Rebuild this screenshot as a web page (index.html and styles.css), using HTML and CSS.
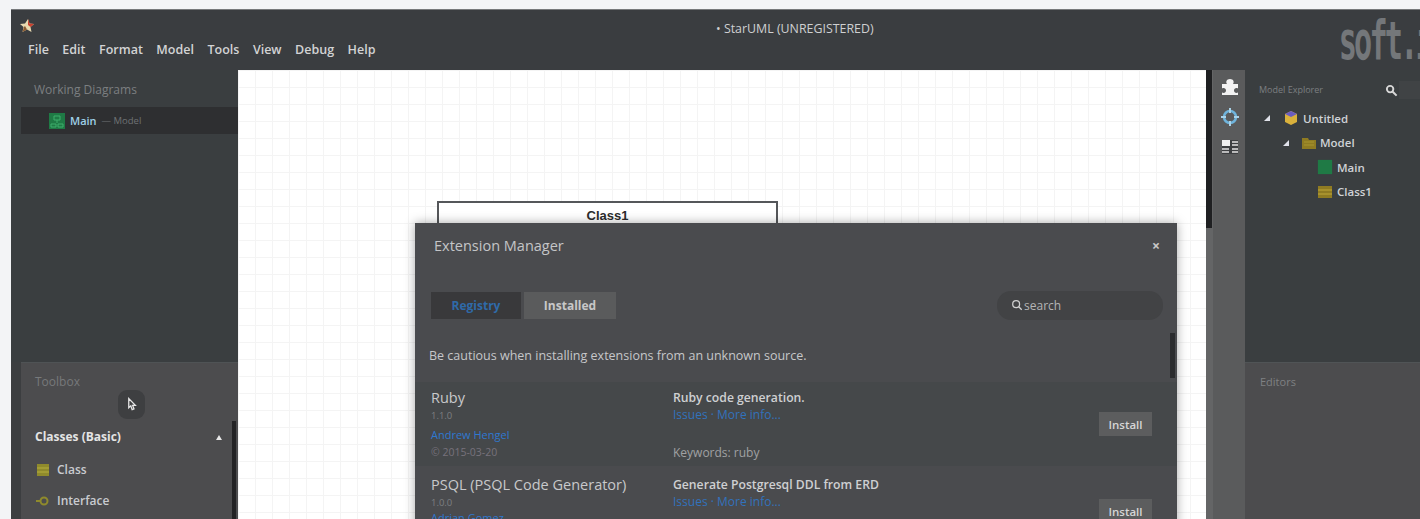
FILE: index.html
```html
<!DOCTYPE html>
<html lang="en">
<head>
<meta charset="utf-8">
<title>StarUML</title>
<link rel="stylesheet" href="styles.css">
</head>
<body>
<div class="app">
  <header class="titlebar">
    <div class="titlebar-left">
      <svg class="logo" viewBox="0 0 16 16" width="16" height="16">
        <path d="M9 1l1.5 4.5L15 6l-3.5 3 1 5L8 11.5 3.500 14l1-5L1 6l5-.5z" fill="#e8d9b0"/>
        <path d="M9 1l1.500 4.500L15 6l-3.500 3L9 7z" fill="#c8402f"/>
        <path d="M5 9l-1.500 5L8 11.500 6 8z" fill="#8a5a30"/>
      </svg>
      <nav class="menu">
        <span>File</span><span>Edit</span><span>Format</span><span>Model</span><span>Tools</span><span>View</span><span>Debug</span><span>Help</span>
      </nav>
    </div>
    <div class="window-title">• StarUML (UNREGISTERED)</div>
    <div class="watermark">soft.i</div>
  </header>

  <div class="workspace">
    <aside class="sidebar">
      <section class="side-top">
        <h2 class="panel-label">Working Diagrams</h2>
        <div class="diagram-row">
          <svg class="diagram-icon" viewBox="0 0 18 18" width="18" height="18">
            <rect x="1" y="1" width="16" height="16" fill="#1f7a45"/>
            <path d="M6 4h6v4H6zM3 12h5v3H3zM10 12h5v3h-5zM9 8v3" fill="none" stroke="#3fae6c" stroke-width="1"/>
          </svg>
          <span class="diagram-name">Main</span>
          <span class="diagram-owner">— Model</span>
        </div>
      </section>
      <section class="toolbox">
        <h2 class="panel-label toolbox-label">Toolbox</h2>
        <div class="cursor-wrap">
          <button class="cursor-btn" type="button">
            <svg viewBox="0 0 12 16" width="11" height="15">
              <path d="M3 1.500v10l2.200-2 1.500 4 2-.8-1.500-3.800h3z" fill="none" stroke="#e6e6e6" stroke-width="1.400"/>
            </svg>
          </button>
        </div>
        <div class="tool-head"><span>Classes (Basic)</span><i class="tool-caret"></i></div>
        <ul class="tool-list">
          <li>
            <svg viewBox="0 0 16 16" width="16" height="16"><rect x="2" y="2" width="12" height="12" fill="#8f8a2c"/><path d="M2 6h12M2 10h12" stroke="#b5ae3e"/></svg>
            Class
          </li>
          <li>
            <svg viewBox="0 0 16 16" width="16" height="16"><circle cx="9" cy="8" r="3.500" fill="none" stroke="#8f8a2c" stroke-width="2"/><path d="M1 8h5" stroke="#8f8a2c" stroke-width="2"/></svg>
            Interface
          </li>
        </ul>
        <div class="toolbox-scroll"></div>
      </section>
    </aside>

    <main class="canvas">
      <div class="class-node">Class1</div>
    </main>

    <div class="rail">
      <div class="rail-scroll"></div>
      <div class="rail-icons">
        <svg viewBox="0 0 20 20" width="20" height="20">
          <path d="M2 7h5c-1.500-2-.5-5 3-5s4.500 3 3 5h5v4.500c-2-1-4 0-4 2s2 3 4 2V18H2v-2.500c2 1 4 0 4-2s-2-3-4-2z" fill="#f2f2f2"/>
        </svg>
        <svg viewBox="0 0 20 20" width="20" height="20">
          <circle cx="10" cy="10" r="6" fill="none" stroke="#6fb4dc" stroke-width="2.500"/>
          <path d="M10 1v5M10 14v5M1 10h5M14 10h5" stroke="#a9d3ea" stroke-width="2"/>
        </svg>
        <svg viewBox="0 0 20 20" width="20" height="20">
          <rect x="2" y="3" width="16" height="14" fill="#3d3f41"/>
          <rect x="2" y="3" width="8" height="6" fill="#f0f0f0"/>
          <path d="M12 5h6M12 8h6M2 12h7M12 12h6M2 15h7M12 15h6" stroke="#e4e4e4" stroke-width="1.500"/>
        </svg>
      </div>
    </div>

    <aside class="explorer">
      <section class="explorer-top">
        <div class="explorer-head">
          <h2 class="panel-label">Model Explorer</h2>
          <svg class="explorer-search" viewBox="0 0 14 14" width="13" height="13">
            <circle cx="5.500" cy="5.500" r="3.500" fill="none" stroke="#d8d8d8" stroke-width="2"/>
            <path d="M8 8l4.500 4.500" stroke="#d8d8d8" stroke-width="2.200"/>
          </svg>
          <div class="explorer-field"></div>
        </div>
        <ul class="tree">
          <li class="depth-0">
            <i class="tree-arrow"></i>
            <svg viewBox="0 0 16 16" width="16" height="16"><path d="M8 1l6 3v8l-6 3-6-3V4z" fill="#d9b13c"/><path d="M8 1l6 3-6 3-6-3z" fill="#6a5cc0"/></svg>
            <span>Untitled</span>
          </li>
          <li class="depth-1">
            <i class="tree-arrow"></i>
            <svg viewBox="0 0 16 16" width="16" height="16"><path d="M1 3h6l1 2h7v9H1z" fill="#8f7b22"/><path d="M3 7h10M3 10h10" stroke="#a8962e"/></svg>
            <span>Model</span>
          </li>
          <li class="depth-2">
            <svg viewBox="0 0 18 18" width="16" height="18"><rect x="1" y="1" width="16" height="16" fill="#1f7a45"/></svg>
            <span>Main</span>
          </li>
          <li class="depth-2">
            <svg viewBox="0 0 16 16" width="16" height="16"><rect x="1" y="2" width="14" height="12" fill="#8f7b22"/><path d="M1 6h14M1 10h14" stroke="#bfa838"/></svg>
            <span>Class1</span>
          </li>
        </ul>
      </section>
      <section class="editors">
        <h2 class="panel-label">Editors</h2>
      </section>
    </aside>
  </div>

  <div class="modal">
    <div class="modal-head">
      <h1>Extension Manager</h1>
      <span class="modal-close">×</span>
    </div>
    <div class="modal-tools">
      <div class="tabs">
        <span class="tab tab-active">Registry</span>
        <span class="tab">Installed</span>
      </div>
      <label class="search">
        <svg viewBox="0 0 14 14" width="12" height="12">
          <circle cx="6" cy="6" r="4" fill="none" stroke="#d0d0d0" stroke-width="1.500"/>
          <path d="M9 9l3.500 3.500" stroke="#d0d0d0" stroke-width="1.500"/>
        </svg>
        <span>search</span>
      </label>
    </div>
    <div class="notice">Be cautious when installing extensions from an unknown source.</div>
    <div class="modal-scroll"></div>
    <article class="ext ext-shaded">
      <div class="ext-meta">
        <h3>Ruby</h3>
        <div class="ext-version">1.1.0</div>
        <a class="ext-author">Andrew Hengel</a>
        <div class="ext-date">© 2015-03-20</div>
      </div>
      <div class="ext-info">
        <p class="ext-desc">Ruby code generation.</p>
        <p class="ext-links">Issues · More info...</p>
        <p class="ext-keys">Keywords: ruby</p>
      </div>
      <button class="install" type="button">Install</button>
    </article>
    <article class="ext">
      <div class="ext-meta">
        <h3>PSQL (PSQL Code Generator)</h3>
        <div class="ext-version">1.0.0</div>
        <a class="ext-author">Adrian Gomez</a>
      </div>
      <div class="ext-info">
        <p class="ext-desc">Generate Postgresql DDL from ERD</p>
        <p class="ext-links">Issues · More info...</p>
      </div>
      <button class="install" type="button">Install</button>
    </article>
  </div>
</div>
</body>
</html>
```

FILE: styles.css
```css
* { box-sizing: border-box; }

html, body {
  margin: 0;
  height: 100%;
}

body {
  padding: 9px 0 0 11px;
  background: #f3f4f6;
  overflow: hidden;
  font-family: "Open Sans", "Liberation Sans", sans-serif;
  font-size: 11px;
  color: #e0e0e0;
}

.app {
  position: relative;
  height: 510px;
  display: flex;
  flex-direction: column;
  background: #3a3d40;
  border-top: 1px solid #77797b;
  overflow: hidden;
}

/* Title bar */
.titlebar {
  position: relative;
  flex: 0 0 60px;
  display: flex;
  background: #3a3d40;
}

.titlebar-left {
  flex: 0 0 705px;
  padding: 8px 0 0 8px;
}

.logo { display: block; }

.menu {
  display: flex;
  gap: 13.500px;
  margin: 9px 0 0 9px;
  font-size: 12.500px;
  font-weight: 600;
  line-height: 14px;
  color: #d2d3d4;
}

.window-title {
  padding-top: 10px;
  font-size: 12.400px;
  color: #cfd0d1;
}

.watermark {
  position: absolute;
  right: -11px;
  top: 0;
  font-family: "DejaVu Sans Mono", monospace;
  font-size: 54px;
  font-weight: 700;
  line-height: 62px;
  letter-spacing: -5px;
  transform: scaleX(.56);
  transform-origin: right center;
  color: #74777a;
}

/* Main columns */
.workspace {
  flex: 1;
  display: flex;
  min-height: 0;
}

.sidebar {
  flex: 0 0 227px;
  display: flex;
  flex-direction: column;
}

.side-top {
  flex: 0 0 292px;
  padding-top: 13px;
  background: #3a3e40;
}

.panel-label {
  margin: 0;
  font-size: 12px;
  font-weight: 400;
  line-height: 14px;
  color: #7c7f81;
}

.side-top .panel-label { padding-left: 23px; }

.diagram-row {
  display: flex;
  align-items: center;
  height: 27px;
  margin: 10px 0 0 10px;
  padding-left: 27px;
  background: #2e2f31;
}

.diagram-icon { margin-right: 4px; }

.diagram-name {
  font-weight: 600;
  font-size: 11px;
  color: #9fd0e6;
}

.diagram-owner {
  margin-left: 5px;
  font-size: 9.500px;
  color: #6f7274;
}

.toolbox {
  position: relative;
  flex: 1;
  margin-left: 10px;
  padding: 12px 0 0 14px;
  background: #4c4c4e;
  border-top: 1px solid #4f5355;
  box-shadow: -10px 0 0 #3c3e40;
}

.toolbox-label { color: #77797b; }

.cursor-wrap {
  display: flex;
  padding-left: 83px;
  margin-top: 1px;
}

.cursor-btn {
  display: flex;
  align-items: center;
  justify-content: center;
  width: 27px;
  height: 29px;
  padding: 0;
  background: #3e3f41;
  border: 0;
  border-radius: 9px;
}

.tool-head {
  display: flex;
  align-items: center;
  justify-content: space-between;
  width: 187px;
  margin-top: 10px;
  font-size: 12px;
  font-weight: 700;
  line-height: 16px;
  color: #e4e4e4;
}

.tool-caret {
  width: 0;
  height: 0;
  border-left: 3px solid transparent;
  border-right: 3px solid transparent;
  border-bottom: 5px solid #e8e8e8;
}

.tool-list {
  list-style: none;
  margin: 9px 0 0;
  padding: 0;
}

.tool-list li {
  display: flex;
  align-items: center;
  gap: 6px;
  height: 31px;
  color: #c9cbd0;
  font-weight: 600;
  font-size: 12px;
}

.toolbox-scroll {
  position: absolute;
  right: 2px;
  top: 58px;
  bottom: 0;
  width: 4px;
  background: #232325;
}

.canvas {
  position: relative;
  flex: 0 0 968px;
  background-color: #fff;
  background-image:
    linear-gradient(#f4f4f4 1px, transparent 1px),
    linear-gradient(90deg, #f4f4f4 1px, transparent 1px);
  background-size: 17px 17px;
}

.class-node {
  position: absolute;
  left: 199px;
  top: 131px;
  width: 341px;
  height: 60px;
  padding-top: 6px;
  background: #fff;
  border: 2px solid #55575a;
  text-align: center;
  font-family: "Liberation Sans", sans-serif;
  font-size: 13px;
  font-weight: 700;
  line-height: 14px;
  color: #2c2c2c;
}

/* Narrow icon rail between canvas and explorer */
.rail {
  flex: 0 0 39px;
  display: flex;
  background: #646566;
}

.rail-scroll {
  flex: 0 0 6px;
  height: 158px;
  background: #1f2022;
}

.rail-icons {
  flex: 1;
  display: flex;
  flex-direction: column;
  align-items: center;
  gap: 10px;
  padding-top: 7px;
  padding-left: 1px;
  background: #5a5b5c;
  margin-left: 1px;
}

.explorer {
  flex: 1;
  display: flex;
  flex-direction: column;
}

.explorer-top {
  flex: 0 0 292px;
  padding: 11px 0 0 14px;
  background: #3a3e40;
}

.explorer-head {
  display: flex;
  align-items: center;
  gap: 50px;
}

.explorer-head .panel-label {
  flex: 0 0 76px;
  font-size: 9px;
}

.explorer-search { flex: none; }

.explorer-field {
  flex: 1;
  height: 18px;
  margin-left: -49px;
  background: #404345;
}

.tree {
  list-style: none;
  margin: 7px 0 0;
  padding: 0;
}

.tree li {
  display: flex;
  align-items: center;
  height: 24.500px;
  font-size: 11.500px;
  font-weight: 600;
  color: #cfd2d6;
}

.depth-0 { padding-left: 5px; gap: 4px; }
.depth-1 { padding-left: 24px; gap: 3px; }
.depth-2 { padding-left: 58px; gap: 4px; }

.tree-arrow {
  width: 0;
  height: 0;
  border-style: solid;
  border-width: 0 0 6px 6px;
  border-color: transparent transparent #e0e2ea transparent;
  margin-right: 9px;
}

.editors {
  flex: 1;
  padding: 12px 0 0 15px;
  background: #4c4c4e;
  border-top: 1px solid #505456;
}

.editors .panel-label {
  font-size: 11px;
  color: #7f8183;
}

/* Extension dialog */
.modal {
  position: absolute;
  left: 404px;
  top: 213px;
  width: 762px;
  height: 320px;
  background: #4a4b4e;
  box-shadow: 0 0 10px rgba(0, 0, 0, .35);
}

.modal-head {
  display: flex;
  justify-content: space-between;
  align-items: center;
  height: 44px;
  padding: 0 17px 0 19px;
}

.modal-head h1 {
  margin: 0;
  font-size: 14.500px;
  font-weight: 400;
  color: #c4c5c7;
}

.modal-close {
  font-size: 14px;
  font-weight: 700;
  color: #c8c8c8;
}

.modal-tools {
  display: flex;
  justify-content: space-between;
  align-items: center;
  height: 66px;
  padding: 10px 14px 0 16px;
}

.tabs {
  display: flex;
  gap: 3px;
}

.tab {
  display: flex;
  align-items: center;
  justify-content: center;
  width: 92px;
  height: 27px;
  font-size: 12px;
  font-weight: 700;
  color: #c8c8c8;
  background: #5a5b5c;
}

.tab-active {
  width: 90px;
  color: #2f6aa8;
  background: #39393b;
}

.search {
  display: flex;
  align-items: center;
  gap: 1px;
  width: 166px;
  height: 29px;
  padding-left: 14px;
  border-radius: 14px;
  background: #424345;
  font-size: 12px;
  color: #b4b5b6;
}

.notice {
  height: 47px;
  padding: 15px 0 0 14px;
  font-size: 12.500px;
  line-height: 16px;
  color: #c6c7c9;
}

.modal-scroll {
  position: absolute;
  right: 2px;
  top: 110px;
  width: 5px;
  height: 45px;
  background: #2b2c2e;
}

.ext {
  display: flex;
  height: 84px;
  padding: 6px 25px 0 16px;
  margin-top: 2px;
}

.ext-shaded { background: #45484a; }

.ext + .ext {
  margin-top: 0;
  padding-top: 9px;
}

.ext-meta { flex: 0 0 242px; }

.ext-meta h3 {
  margin: 0;
  font-size: 14.500px;
  font-weight: 400;
  line-height: 20px;
  color: #c8c9cb;
}

.ext-version {
  font-size: 9.500px;
  line-height: 16px;
  color: #7d7f81;
}

.ext-author {
  display: block;
  font-size: 11px;
  line-height: 21px;
  color: #2f78d0;
}

.ext + .ext .ext-author { margin-top: -4px; }

.ext-date {
  font-size: 10.500px;
  line-height: 14px;
  color: #77727c;
}

.ext-info {
  flex: 1;
  margin: 0;
}

.ext-info p { margin: 0; }

.ext-desc {
  font-size: 12.200px;
  font-weight: 600;
  line-height: 19px;
  color: #cfd0d2;
}

.ext-links {
  font-size: 12px;
  line-height: 16px;
  color: #3272bc;
}

.ext-keys {
  margin-top: 22px !important;
  font-size: 12px;
  line-height: 16px;
  color: #a0a1a3;
}

.install {
  align-self: flex-start;
  width: 53px;
  height: 24px;
  margin-top: 24px;
  padding: 0;
  border: 0;
  background: #5c5d5e;
  font: 600 11.500px "Open Sans", "Liberation Sans", sans-serif;
  color: #d6d6d6;
}
```
